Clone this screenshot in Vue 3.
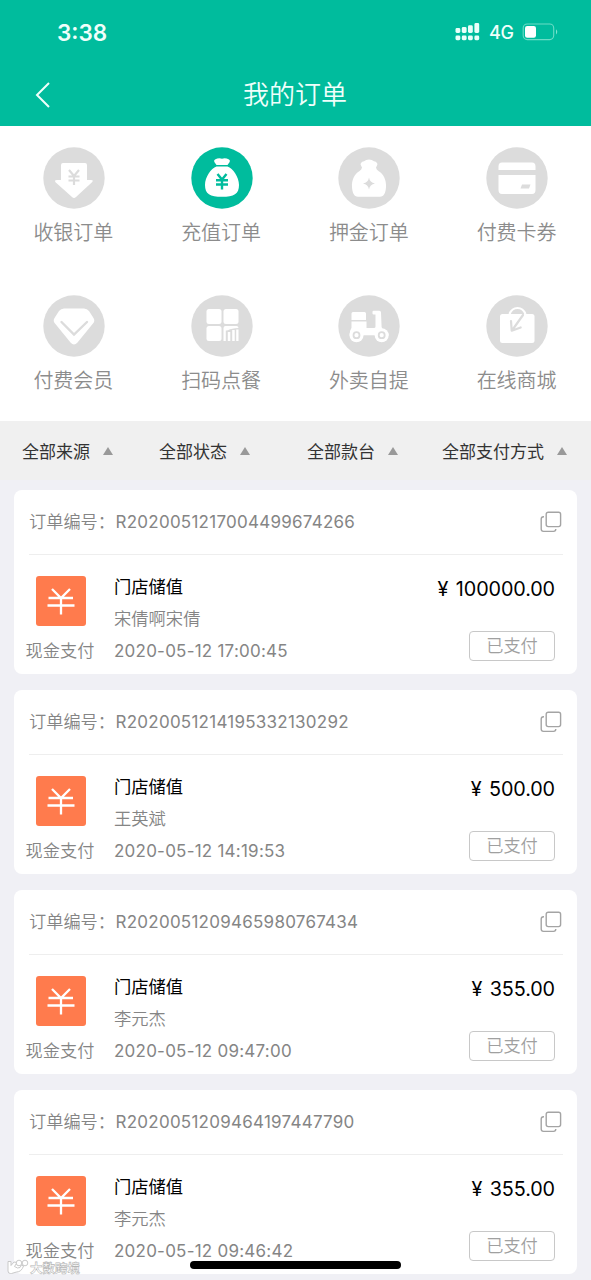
<script setup>
const categories = [
  { icon: 'cash', label: '收银订单' },
  { icon: 'bag', label: '充值订单', active: true },
  { icon: 'deposit', label: '押金订单' },
  { icon: 'card', label: '付费卡券' },
  { icon: 'gem', label: '付费会员' },
  { icon: 'scan', label: '扫码点餐' },
  { icon: 'scooter', label: '外卖自提' },
  { icon: 'shop', label: '在线商城' },
]
const filters = ['全部来源', '全部状态', '全部款台', '全部支付方式']
const orders = [
  { no: 'R2020051217004499674266', name: '宋倩啊宋倩', time: '2020-05-12 17:00:45', amount: '100000.00' },
  { no: 'R2020051214195332130292', name: '王英斌', time: '2020-05-12 14:19:53', amount: '500.00' },
  { no: 'R2020051209465980767434', name: '李元杰', time: '2020-05-12 09:47:00', amount: '355.00' },
  { no: 'R2020051209464197447790', name: '李元杰', time: '2020-05-12 09:46:42', amount: '355.00' },
]
</script>

<template>
  <div class="screen">
    <header class="top">
      <div class="status">
        <span class="clock">3:38</span>
        <svg class="signal" width="28" height="20" viewBox="0 0 28 20">
          <g fill="#e9fffa">
            <rect x="1.500" y="6" width="4.800" height="5" rx="1.400" />
            <rect x="7.800" y="5" width="4.800" height="6" rx="1.400" />
            <rect x="14" y="3.300" width="4.800" height="7.700" rx="1.400" />
            <rect x="20.400" y="1" width="4.800" height="10" rx="1.400" />
            <rect x="1.500" y="13.600" width="4.800" height="4.600" rx="1.400" />
            <rect x="7.800" y="13.600" width="4.800" height="4.600" rx="1.400" />
            <rect x="14" y="13.600" width="4.800" height="4.600" rx="1.400" />
            <rect x="20.400" y="13.600" width="4.800" height="4.600" rx="1.400" />
          </g>
        </svg>
        <span class="net">4G</span>
        <svg class="battery" width="38" height="20" viewBox="0 0 38 20">
          <rect x="1.200" y="2" width="30.500" height="15.600" rx="4" fill="none" stroke="#6bdcc6" stroke-width="1.100" />
          <rect x="3" y="4" width="11" height="11.800" rx="2.200" fill="#fff" />
          <path d="M34 7.200q2.500 2.600 0 5.200z" fill="#7de3cf" />
        </svg>
      </div>
      <div class="nav">
        <svg class="back" width="20" height="28" viewBox="0 0 20 28">
          <path d="M16 2 4 14l12 12" fill="none" stroke="#effffb" stroke-width="2" />
        </svg>
        <h1>我的订单</h1>
      </div>
    </header>

    <section class="cats">
      <div v-for="c in categories" :key="c.label" class="cat">
        <svg width="62" height="62" viewBox="0 0 62 62" :class="['disc', { active: c.active }]">
          <circle cx="31" cy="31" r="30.700" fill="currentColor" />
          <g v-if="c.icon === 'cash'">
            <path d="M20 16h22q2 0 2 2v15h4q3 0 1 2.200L33 50q-2 1.800-4 0L12.500 35.200Q11 33 14 33h4V18q0-2 2-2z" fill="#fff" />
            <path d="m26 23 5 6 5-6M31 29v9M25.500 29.500h11M25.500 33.500h11" fill="none" stroke="currentColor" stroke-width="2.200" />
          </g>
          <g v-else-if="c.icon === 'bag'">
            <path d="M24 12.500q3.500-1.800 7-.8 3.500-1 7 .8 1.700 1 .5 2.800L36.500 18h-11L23.500 15.300Q22.300 13.500 24 12.500zM25.500 19.500h11C42 21.500 48 30 48 38c0 9-5 11.800-17 11.800S14 47 14 38c0-8 6-16.500 11.500-18.500z" fill="#fff" />
            <path d="m26.500 27 4.500 5.500 4.500-5.500M31 32v10.500M25 33.200h12M25 37.500h12" fill="none" stroke="currentColor" stroke-width="2.400" />
          </g>
          <g v-else-if="c.icon === 'deposit'">
            <path d="M23 16Q24 14.500 26 14.200Q28 12.500 31 12.500Q34 12.500 36 14.200Q38 14.500 39 16Q39.900 17 39 18.500L38 20.500Q38.300 22.500 40.500 24C45.500 27 48.500 33 48 40C47.600 46 46 49.700 42 49.700H20C16 49.700 14.400 46 14 40C13.500 33 16.500 27 21.500 24Q23.700 22.500 24 20.500L23 18.500Q22.100 17 23 16z" fill="#fff" />
            <path d="M31 30.500q.8 5.200 6 6-5.200.8-6 6-.8-5.200-6-6 5.200-.8 6-6z" fill="currentColor" />
          </g>
          <g v-else-if="c.icon === 'card'">
            <path d="M16 15.500h30q3.500 0 3.500 4V23h-37v-3.500q0-4 3.500-4zM12.500 28h37v15q0 4-3.500 4H16q-3.500 0-3.500-4z" fill="#fff" />
            <path d="M36 37.500h8.500l-1.500 4h-8.500z" fill="currentColor" />
          </g>
          <g v-else-if="c.icon === 'gem'">
            <path d="M21 13.500h20q3 0 5 2.500l4.500 7q1.800 3-.5 5.500L34.500 47.500q-3.500 4-7 0L12 28.500q-2.300-2.500-.5-5.500l4.500-7q2-2.500 5-2.500z" fill="#fff" />
            <path d="m18.500 27 12.500 12.500L44 27" fill="none" stroke="currentColor" stroke-width="2.400" stroke-linecap="round" />
          </g>
          <g v-else-if="c.icon === 'scan'" fill="#fff">
            <rect x="15.500" y="14" width="15" height="15" rx="2.500" />
            <rect x="32.500" y="14" width="15" height="15" rx="2.500" />
            <rect x="15.500" y="31" width="15" height="15" rx="2.500" />
            <path d="M34.500 31h11q2 0 2 2-7 .3-10.500 2.200-2 .6-4.500.3V33q0-2 2-2zM32.500 35h2.300v11h-2.300zM36.800 37h2.500v9h-2.500zM41.200 35h2.500v11h-2.500zM45.200 34.500h2.300V46h-2.300z" />
          </g>
          <g v-else-if="c.icon === 'scooter'">
            <path d="M15 17h11.500q1.500 0 1.500 1.500V25H13.500v-6.500Q13.500 17 15 17zM13.500 26.500h15V33H36q1.500 0 1.500-1.500V19.500h-2q-1 0-1-1v-1.800q0-1 1-1h5.800q1.700 0 1.700 1.700l.6 14.600q.3 2 2.500 3.200 4.400 2 4.600 5h-39q-.5-4 1.800-7.500z" fill="#fff" />
            <circle cx="18.500" cy="40.200" r="7" fill="#fff" />
            <circle cx="43.700" cy="40.200" r="7" fill="#fff" />
            <circle cx="18.500" cy="40.200" r="3" fill="none" stroke="currentColor" stroke-width="1.800" />
            <circle cx="43.700" cy="40.200" r="3" fill="none" stroke="currentColor" stroke-width="1.800" />
          </g>
          <g v-else>
            <rect x="14" y="19" width="34.500" height="29" rx="2.500" fill="#fff" />
            <path d="M23.500 19q2.500-6 8-6t8 6" fill="none" stroke="#fff" stroke-width="2.200" />
            <path d="m37 20-11 15.500M25 26l.7 9.700 9-3.200" fill="none" stroke="currentColor" stroke-width="2.200" stroke-linecap="round" stroke-linejoin="round" />
          </g>
        </svg>
        <span class="cat-label">{{ c.label }}</span>
      </div>
    </section>

    <nav class="filters">
      <div v-for="f in filters" :key="f" class="filter"><span>{{ f }}</span><i></i></div>
    </nav>

    <main class="orders">
      <article v-for="o in orders" :key="o.no" class="order">
        <div class="order-head">
          <span class="caption">订单编号：</span>
          <span class="number">{{ o.no }}</span>
          <svg class="copy" width="22" height="22" viewBox="0 0 22 22" fill="none" stroke="#a4a4a4" stroke-width="1.400">
            <rect x="6.200" y="1.200" width="14.400" height="14.400" rx="2" />
            <path d="M4 5.800H3.500q-2.300 0-2.300 2.300v10q0 2.300 2.300 2.300h10q2.300 0 2.300-2.300V18" />
          </svg>
        </div>
        <div class="order-body">
          <div class="method">
            <svg width="50" height="50" viewBox="0 0 50 50">
              <rect width="50" height="50" rx="3" fill="#ff7b4d" />
              <path d="m16 13 9 9 9-9M12.500 22h24.500M11.500 29.500h27M25 22v16.500" fill="none" stroke="#fff" stroke-width="2.300" />
            </svg>
            <span>现金支付</span>
          </div>
          <div class="details">
            <span class="title">门店储值</span>
            <span class="person">{{ o.name }}</span>
            <span class="time">{{ o.time }}</span>
          </div>
          <div class="result">
            <span class="amount">¥ {{ o.amount }}</span>
            <span class="badge">已支付</span>
          </div>
        </div>
      </article>
    </main>

    <div class="mark">
      <svg width="22" height="16" viewBox="0 0 22 16" fill="#fff" stroke="#c4c4c4" stroke-width=".9">
        <path d="M1 2.500h3v4l3-3.500 3 .5-2.500 4 3 1.500q3 .5 4-3l2 1q-2 6-7 6l-5 1.500H3.500Q1 14.500 1 12z" />
        <circle cx="12" cy="4" r="2.800" />
        <circle cx="18" cy="4" r="2.800" />
      </svg>
      <span>大数跨境</span>
    </div>
    <div class="home"></div>
  </div>
</template>

<style>
body { background: #f0f0f5; overflow: hidden; }
</style>

<style scoped>
.screen {
  position: relative;
  width: 591px;
  height: 1280px;
  overflow: hidden;
  background: #f0f0f5;
  font-family: Inter, "Noto Sans CJK SC", sans-serif;
  font-weight: 400;
  color: #858585;
  white-space: nowrap;
}
.top { height: 126px; background: #00bc9d; color: #effffb; }
.status { display: flex; align-items: center; height: 64px; padding-left: 57px; }
.clock { width: 397px; padding-top: 1px; font-size: 22.5px; font-weight: 600; line-height: 30px; }
.signal { flex: none; }
.net { width: 26px; margin-left: 7px; padding-top: 1px; font-size: 18px; font-weight: 500; letter-spacing: -.4px; }
.battery { flex: none; margin-left: 7px; }
.nav { display: flex; align-items: center; height: 61px; padding: 0 54px 0 33px; }
.back { flex: none; }
h1 { flex: 1; margin: 0; padding-top: 1px; font-size: 26px; font-weight: 350; line-height: 36px; text-align: center; }
.cats {
  display: grid;
  grid-template-columns: repeat(4, 1fr);
  grid-auto-rows: 148px;
  height: 274px;
  padding-top: 21px;
  background: #fff;
}
.cat { display: flex; flex-direction: column; align-items: center; }
.disc { color: #dcdcdc; }
.disc.active { color: #00bc9d; }
.cat-label { margin: 9px 1px 0 0; font-size: 20px; line-height: 30px; font-weight: 350; color: #8c8c8c; }
.filters {
  display: grid;
  grid-template-columns: 137px 148px 135px auto;
  align-items: center;
  height: 59px;
  padding-left: 22px;
  background: #f0f0f0;
  color: #333;
  font-size: 17px;
}
.filter { display: flex; align-items: center; gap: 13px; }
.filter i { border: 5.500px solid transparent; border-top: 0; border-bottom: 8px solid #999; }
.orders { display: grid; gap: 16px; padding: 10px 14px 0; }
.order { height: 184px; border-radius: 8px; background: #fff; box-sizing: border-box; padding: 0 14px 0 15px; }
.order-head { display: flex; align-items: center; height: 64px; border-bottom: 1px solid #eee; font-size: 17px; }
.caption { width: 86.500px; font-weight: 350; font-size: 17.200px; line-height: 24px; margin-top: -1px; }
.number { font-size: 17px; letter-spacing: .25px; }
.copy { margin-left: auto; margin-right: 1px; }
.order-body { display: flex; padding-right: 8px; margin-left: -5px; }
.method { display: flex; flex-direction: column; align-items: center; width: 73px; padding-top: 21px; font-size: 17.200px; font-weight: 350; line-height: 26px; }
.method span { margin: 12px 1px 0 0; }
.details { display: flex; flex-direction: column; margin-left: 17px; padding-top: 16px; font-size: 17.300px; line-height: 32px; }
.title { color: #000; }
.person { font-weight: 350; }
.time { font-size: 17px; letter-spacing: .23px; }
.result { display: flex; flex-direction: column; align-items: flex-end; flex: 1; padding-top: 20px; }
.amount { color: #000; font-size: 19.800px; line-height: 28px; letter-spacing: -.1px; word-spacing: 2px; }
.badge { margin-top: 28px; width: 86px; height: 30px; box-sizing: border-box; border: 1px solid #c8c8c8; border-radius: 4px; font-size: 17.200px; line-height: 28px; font-weight: 350; color: #a0a0a0; text-align: center; }
.home { position: absolute; left: 190px; top: 1261px; width: 211px; height: 8px; border-radius: 4px; background: #000; }
.mark { position: absolute; left: 7px; top: 1259px; display: flex; gap: 1px; align-items: center; height: 16px; font-size: 12.500px; font-weight: 700; color: #fff; -webkit-text-stroke: .6px #b4b4b4; }
</style>
